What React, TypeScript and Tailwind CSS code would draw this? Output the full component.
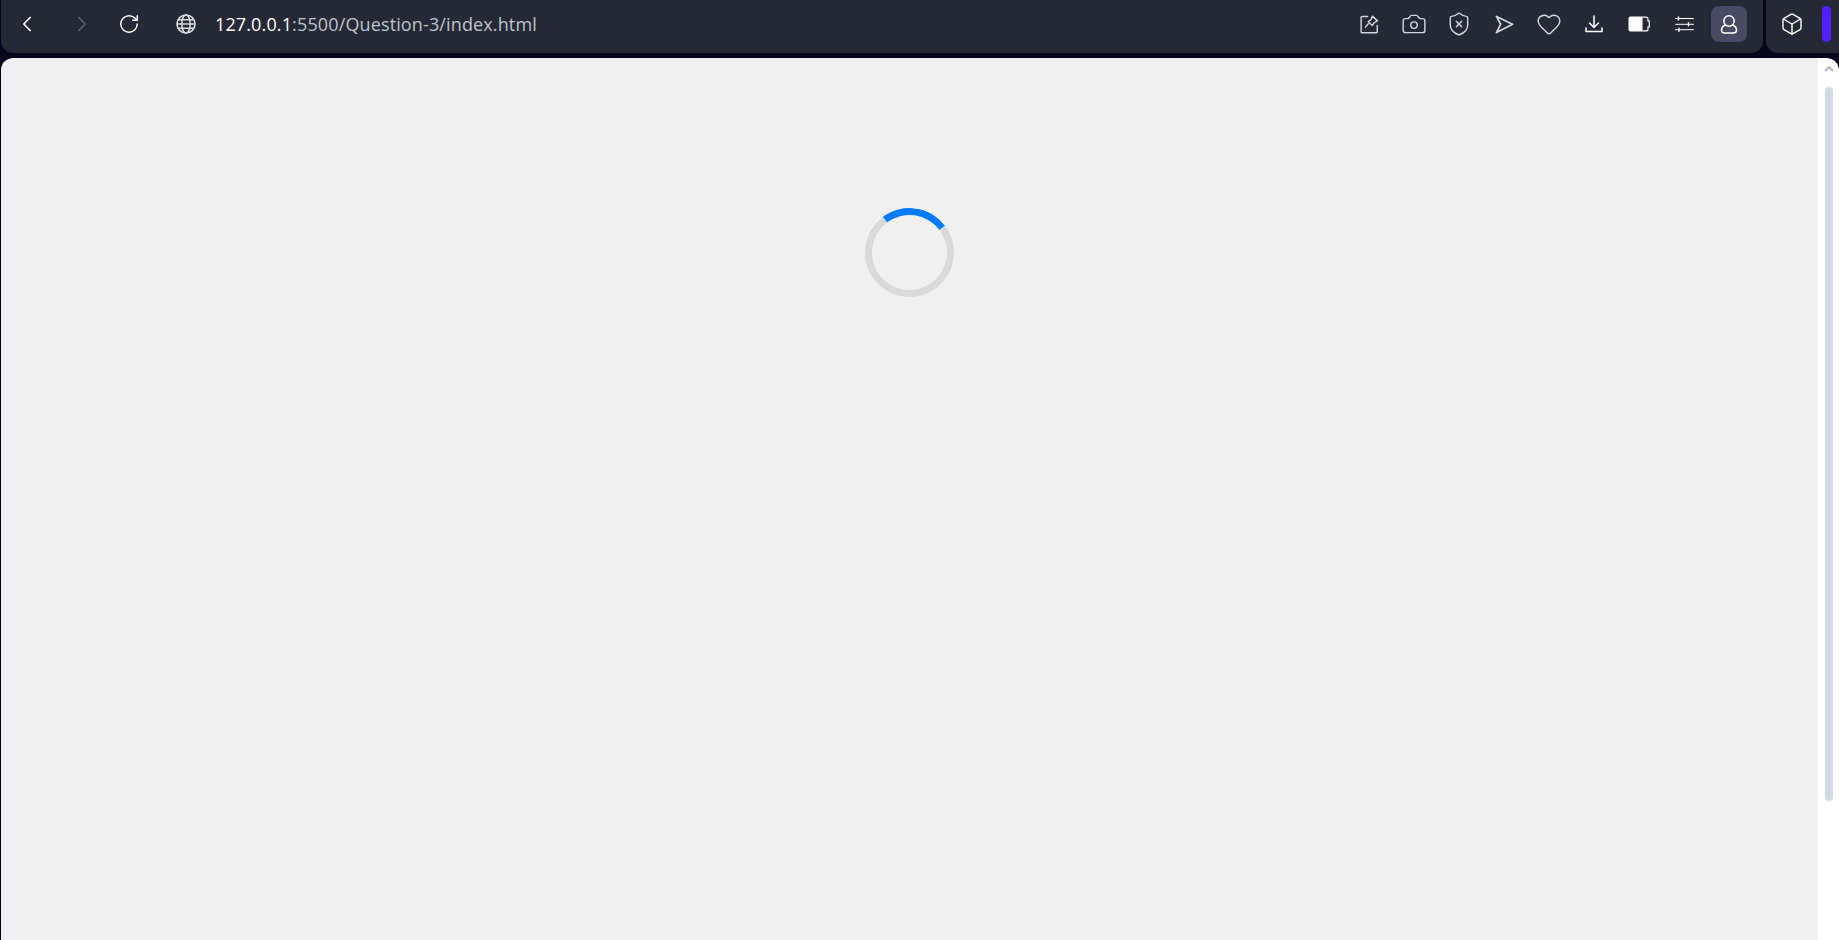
import { ChevronLeft, ChevronRight, RotateCw, Camera, ShieldX, Heart, Box } from "lucide-react";

function GlobeIcon() {
  return (
    <svg width="20" height="20" viewBox="0 0 20 20" fill="none" stroke="currentColor" strokeWidth="1.600">
      <circle cx="10" cy="10" r="9" />
      <ellipse cx="10" cy="10" rx="4.200" ry="9" />
      <path d="M1 10h18M2.200 5.800h15.600M2.200 14.200h15.600" />
    </svg>
  );
}

function SnapIcon() {
  return (
    <svg width="19" height="19" viewBox="0 0 20 20" fill="none" stroke="currentColor" strokeWidth="1.500" strokeLinecap="round" strokeLinejoin="round">
      <path d="M8 1.500H2.200a1 1 0 0 0-1 1v15.300a.8.8 0 0 0 .8.8h15.400a.8.8 0 0 0 .8-.8V11" />
      <path d="M13 1.200l5.500 5-3.300 1.500-2.200 3.300-4.300-4 3-2.300z" />
      <path d="M8.700 9.300l-3 3.500" />
    </svg>
  );
}

function SendIcon() {
  return (
    <svg width="19" height="19" viewBox="0 0 20 20" fill="none" stroke="currentColor" strokeWidth="1.800" strokeLinejoin="round">
      <path d="M1.500 1.500L18.500 9.700 1.500 18.500 6 9.700z" />
    </svg>
  );
}

function DownloadIcon() {
  return (
    <svg width="20" height="20" viewBox="0 0 20 20" fill="none" stroke="currentColor" strokeWidth="1.500" strokeLinecap="round" strokeLinejoin="round">
      <path d="M10 2v11M5.500 9l4.500 4.500L14.500 9" />
      <path d="M2 14v3.500h16V14" />
    </svg>
  );
}

function BatteryIcon() {
  return (
    <svg width="22" height="16" viewBox="0 0 22 16">
      <rect x="0.500" y="0.500" width="14" height="15" rx="2" fill="#fff" />
      <path d="M13 1.100h5a2 2 0 0 1 2 2v1.900h1.300v6H20v1.900a2 2 0 0 1-2 2h-5" fill="none" stroke="#fff" strokeWidth="1.200" />
    </svg>
  );
}

function SlidersIcon() {
  return (
    <svg width="19" height="16" viewBox="0 0 19 16" stroke="#fff" strokeWidth="1" strokeLinecap="round" fill="none">
      <path d="M.6 2.500h17.800M.6 8.300h17.800M.6 13.700h17.800" />
      <path d="M3.500 1v3M13.500 6.800v3M4 12.200v3" strokeWidth="1.400" />
    </svg>
  );
}

function UserIcon() {
  return (
    <svg width="18" height="19" viewBox="0 0 18 19" fill="none" stroke="currentColor" strokeWidth="1.500" strokeLinejoin="round">
      <circle cx="9" cy="6" r="5.200" />
      <path d="M5.500 10C3 11 1.500 12.500 1.500 15c0 2 1.300 3 3 3h9c1.700 0 3-1 3-3 0-2.500-1.500-4-4-5" />
    </svg>
  );
}

function ToolbarButton({ children }: { children: React.ReactNode }) {
  return <button className="flex h-9 w-9 items-center justify-center rounded-lg text-[#d5d7dc]">{children}</button>;
}

export default function App() {
  return (
    <div className="flex h-[940px] w-[1839px] flex-col overflow-hidden bg-[#05051c]" style={{ fontFamily: '"Open Sans", "Noto Sans", sans-serif' }}>
      <header className="flex h-[58px] shrink-0 items-start pl-px">
        <div className="flex h-[53px] flex-1 items-center rounded-b-xl bg-[#252936] pb-[5px] pr-4">
          <button className="ml-2 flex h-9 w-9 items-center justify-center text-white">
            <ChevronLeft size={26} strokeWidth={1.500} />
          </button>
          <button className="ml-[19px] flex h-9 w-9 items-center justify-center text-[#5b5e69]">
            <ChevronRight size={26} strokeWidth={1.500} />
          </button>
          <button className="ml-[11px] flex h-9 w-9 items-center justify-center text-white">
            <RotateCw size={22} strokeWidth={1.600} />
          </button>
          <span className="ml-[29px] text-[#d8dade]">
            <GlobeIcon />
          </span>
          <div className="ml-[19px] text-[18px] tracking-[0.13px] text-[#bfc3cc]">
            <span className="text-white">127.0.0.1</span>:5500/Question-3/index.html
          </div>
          <div className="ml-auto flex items-center gap-[9px]">
            <ToolbarButton><SnapIcon /></ToolbarButton>
            <ToolbarButton><Camera size={26} strokeWidth={1.300} /></ToolbarButton>
            <ToolbarButton><ShieldX size={26} strokeWidth={1.300} /></ToolbarButton>
            <ToolbarButton><SendIcon /></ToolbarButton>
            <ToolbarButton><Heart size={26} strokeWidth={1.300} /></ToolbarButton>
            <ToolbarButton><span className="text-white"><DownloadIcon /></span></ToolbarButton>
            <ToolbarButton><BatteryIcon /></ToolbarButton>
            <ToolbarButton><SlidersIcon /></ToolbarButton>
            <button className="flex h-9 w-9 items-center justify-center rounded-lg bg-[#484a63] text-white">
              <UserIcon />
            </button>
          </div>
        </div>
        <div className="ml-[3px] flex h-[53px] w-[73px] items-center rounded-bl-xl bg-[#252936] pb-[5px]">
          <span className="ml-[14px] text-white">
            <Box size={24} strokeWidth={1.400} />
          </span>
          <span className="ml-[18px] h-9 w-[9px] rounded-full bg-[#5420ff]" />
        </div>
      </header>
      <main className="flex min-h-0 flex-1 overflow-hidden rounded-t-xl pl-px">
        <div className="flex flex-1 justify-center rounded-tl-xl bg-[#f0f0f0] pt-[150px]">
          <div className="h-[89px] w-[89px] rotate-[8deg] rounded-full border-[7px] border-[#dadada] border-t-[#007bff]" />
        </div>
        <div className="flex w-[21px] flex-col items-center rounded-tr-xl bg-white">
          <svg className="mt-[8px]" width="10" height="6" viewBox="0 0 10 6" fill="none" stroke="#b0b4ba" strokeWidth="2">
            <path d="M1 5l4-4 4 4" />
          </svg>
          <div className="mt-[15px] h-[714px] w-2 rounded-full bg-[#d0dbe5]" />
        </div>
      </main>
    </div>
  );
}
